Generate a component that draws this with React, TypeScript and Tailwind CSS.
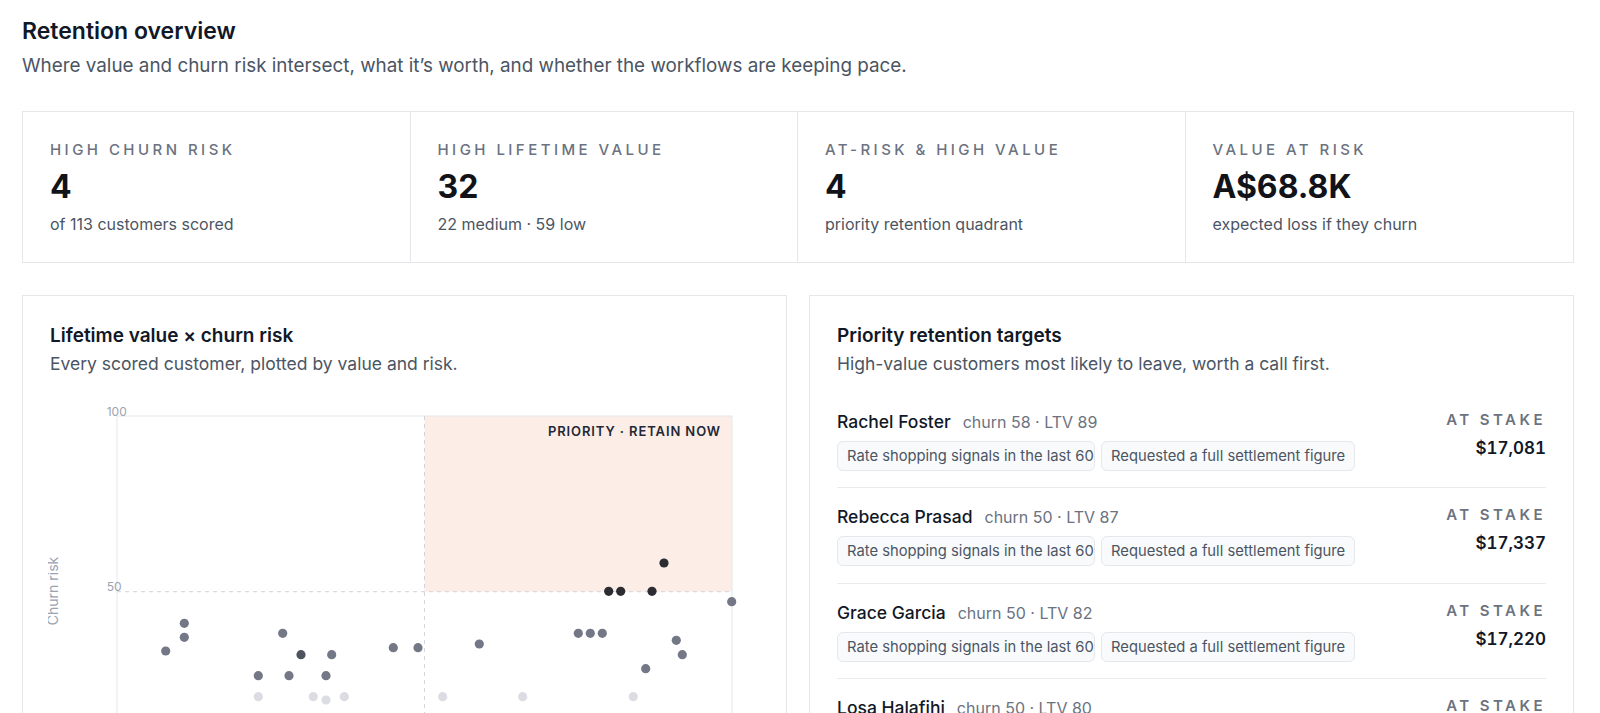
import React from 'react';

type Stat = { label: string; value: string; sub: string };
type Target = { name: string; meta: string; stake: string };
type Dot = [number, number, 'mid' | 'dark' | 'deep' | 'light'];

const stats: Stat[] = [
    { label: 'High churn risk', value: '4', sub: 'of 113 customers scored' },
    { label: 'High lifetime value', value: '32', sub: '22 medium · 59 low' },
    { label: 'At-risk & high value', value: '4', sub: 'priority retention quadrant' },
    { label: 'Value at risk', value: 'A$68.8K', sub: 'expected loss if they churn' },
];

const targets: Target[] = [
    { name: 'Rachel Foster', meta: 'churn 58 · LTV 89', stake: '$17,081' },
    { name: 'Rebecca Prasad', meta: 'churn 50 · LTV 87', stake: '$17,337' },
    { name: 'Grace Garcia', meta: 'churn 50 · LTV 82', stake: '$17,220' },
    { name: 'Losa Halafihi', meta: 'churn 50 · LTV 80', stake: '$16,904' },
];

const signals = ['Rate shopping signals in the last 60 days', 'Requested a full settlement figure'];

// svg coords, origin sits 2px left of the card padding
const dots: Dot[] = [
    [117.7, 256, 'mid'], [136.3, 228.3, 'mid'], [136.3, 242.3, 'mid'],
    [234.7, 238.3, 'mid'], [253, 259.7, 'deep'], [283.7, 259.7, 'mid'],
    [210.3, 280.7, 'mid'], [241, 280.7, 'mid'], [278, 280.7, 'mid'],
    [345.3, 252.7, 'mid'], [370, 252.7, 'mid'], [431.3, 249, 'mid'],
    [530.3, 238.3, 'mid'], [542.3, 238.3, 'mid'], [554.3, 238.3, 'mid'],
    [628.3, 245.3, 'mid'], [634.3, 259.7, 'mid'], [597.7, 273.7, 'mid'],
    [683.7, 206.7, 'mid'],
    [560.7, 196.3, 'dark'], [572.7, 196.3, 'dark'], [604, 196.3, 'dark'], [616, 168, 'dark'],
    [210.3, 301.7, 'light'], [265.3, 301.7, 'light'], [278, 305, 'light'], [296.3, 301.7, 'light'],
    [394.7, 301.7, 'light'], [474.7, 301.7, 'light'], [585.3, 301.7, 'light'],
];

const dotFill = { mid: '#747785', deep: '#4f5360', dark: '#2b2d33', light: '#dcdde2' };

function ScatterChart() {
    const left = 69, right = 684, top = 21, mid = 196.7, bottom = 372;
    const midX = (left + right) / 2;

    return (
        <svg width={711} height={400} className="block ml-[-2px] mt-[19px]">
            <rect x={midX} y={top} width={right - midX} height={mid - top} fill="#fcede7" />
            <line x1={left} y1={top} x2={right} y2={top} stroke="#e5e7eb" />
            <line x1={left} y1={top} x2={left} y2={bottom} stroke="#e5e7eb" />
            <line x1={right} y1={top} x2={right} y2={bottom} stroke="#e5e7eb" />
            <line x1={left} y1={bottom} x2={right} y2={bottom} stroke="#e5e7eb" />
            <line x1={left} y1={mid} x2={right} y2={mid} stroke="#d1d5db" strokeDasharray="4 4" />
            <line x1={midX} y1={top} x2={midX} y2={bottom} stroke="#d1d5db" strokeDasharray="4 4" />

            <text x={58.7} y={20.5} fontSize={12} fill="#9ca3af">100</text>
            <text x={58.7} y={196} fontSize={12} fill="#9ca3af">50</text>
            <text
                x={10.3}
                y={196}
                fontSize={14}
                fill="#9ca3af"
                textAnchor="middle"
                transform="rotate(-90 10.3 196)"
            >
                Churn risk
            </text>
            <text
                x={673}
                y={40.7}
                fontSize={13}
                fontWeight={600}
                fill="#1f2937"
                textAnchor="end"
                letterSpacing="0.9"
            >
                PRIORITY · RETAIN NOW
            </text>

            {dots.map(([x, y, tone], i) => (
                <circle key={i} cx={x} cy={y} r={4.6} fill={dotFill[tone]} />
            ))}
        </svg>
    );
}

function TargetRow({ target }: { target: Target }) {
    return (
        <div className="flex items-start justify-between pt-[17px] pb-[16.5px] border-b border-[#e9eaee]">
            <div>
                <div className="flex items-baseline gap-3 leading-6">
                    <span className="text-[17.5px] font-medium text-[#111827]">{target.name}</span>
                    <span className="text-[16px] text-[#6b7280]">{target.meta}</span>
                </div>
                <div className="flex gap-1.5 mt-[7px]">
                    {signals.map(s => (
                        <span
                            key={s}
                            className="max-w-[258px] overflow-hidden whitespace-nowrap rounded-md border border-[#e5e7eb] bg-[#f9fafb] px-[9px] py-1 text-[14.75px] leading-5 text-[#4b5563]"
                        >
                            {s}
                        </span>
                    ))}
                </div>
            </div>
            <div className="text-right">
                <div className="text-[15px] leading-5 font-semibold uppercase tracking-[0.23em] text-[#6b7280]">At stake</div>
                <div className="mt-[6px] text-[17px] leading-6 font-semibold tabular-nums text-[#111827]">{target.stake}</div>
            </div>
        </div>
    );
}

export default function App() {
    return (
        <div className="min-h-screen bg-white pt-[17px] pl-[22px] pr-[26px] pb-10 font-['Inter',sans-serif] text-[#111827]">
            <h1 className="text-[23px] leading-7 font-semibold">Retention overview</h1>
            <p className="mt-[7px] text-[18.85px] leading-7 text-[#4b5563]">
                Where value and churn risk intersect, what it’s worth, and whether the workflows are keeping pace.
            </p>

            {/* Headline numbers */}
            <div className="mt-[31px] grid grid-cols-4 divide-x divide-[#e5e7eb] border border-[#e5e7eb]">
                {stats.map(stat => (
                    <div key={stat.label} className="px-[27px] pt-[28px] pb-[26px]">
                        <div className="text-[15px] leading-5 font-medium uppercase tracking-[0.23em] text-[#6b7280]">{stat.label}</div>
                        <div className="mt-2 text-[32px] leading-[38px] font-bold text-[#111318]">{stat.value}</div>
                        <div className="mt-[6px] text-[16px] leading-6 text-[#4b5563]">{stat.sub}</div>
                    </div>
                ))}
            </div>

            <div className="mt-8 grid grid-cols-2 gap-[22px]">
                <div className="border border-[#e5e7eb] px-[27px] pt-[27px] pb-6">
                    <h2 className="text-[19px] leading-[26px] font-semibold">Lifetime value × churn risk</h2>
                    <p className="mt-[3px] text-[17.5px] leading-6 text-[#4b5563]">Every scored customer, plotted by value and risk.</p>
                    <ScatterChart />
                </div>

                <div className="border border-[#e5e7eb] px-[27px] pt-[27px] pb-6">
                    <h2 className="text-[19px] leading-[26px] font-semibold">Priority retention targets</h2>
                    <p className="mt-[3px] text-[17.5px] leading-6 text-[#4b5563]">High-value customers most likely to leave, worth a call first.</p>
                    <div className="mt-[16.5px]">
                        {targets.map(t => (
                            <TargetRow key={t.name} target={t} />
                        ))}
                    </div>
                </div>
            </div>
        </div>
    );
}
